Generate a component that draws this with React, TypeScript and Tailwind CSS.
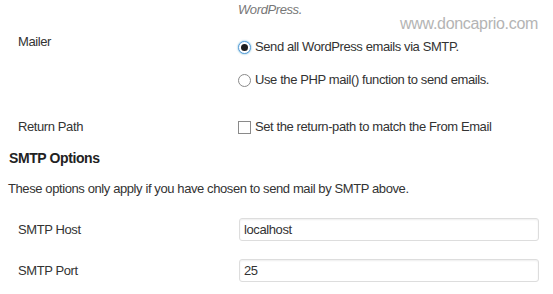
import React from "react";

function Radio({ checked }: { checked?: boolean }) {
  return (
    <span
      className={
        "inline-flex items-center justify-center w-[13px] h-[13px] rounded-full border bg-white shrink-0 " +
        (checked
          ? "border-[#5b9dd9] shadow-[0_0_2px_rgba(30,140,190,0.8)]"
          : "border-[#8a8a8a]")
      }
    >
      {checked && <span className="w-[7px] h-[7px] rounded-full bg-[#1e1e1e]" />}
    </span>
  );
}

export default function App() {
  return (
    <div
      className="relative w-[553px] h-[294px] bg-white text-[#333] text-[13px] tracking-[-0.4px] overflow-hidden"
      style={{ fontFamily: '"Liberation Sans", Arial, sans-serif' }}
    >
      {/* watermark */}
      <div className="absolute left-[400px] top-[14px] text-[16px] leading-[20px] tracking-[-0.3px] text-[#b4b4b4]">
        www.doncaprio.com
      </div>

      <div className="grid grid-cols-[238px_1fr]">
        <div className="h-[20px]" />
        <div className="h-[20px] leading-[20px] italic text-[#777]">WordPress.</div>

        {/* Mailer */}
        <div className="pl-[18px] pt-[12px] leading-[20px]">Mailer</div>
        <div className="flex flex-col gap-[13px] pt-[17px]">
          <label className="flex items-center gap-[4px] h-[20px]">
            <Radio checked />
            <span>Send all WordPress emails via SMTP.</span>
          </label>
          <label className="flex items-center gap-[4px] h-[20px]">
            <Radio />
            <span>Use the PHP mail() function to send emails.</span>
          </label>
        </div>

        {/* Return path */}
        <div className="pl-[18px] pt-[27px] leading-[20px]">Return Path</div>
        <div className="pt-[27px]">
          <label className="flex items-center gap-[4px] h-[20px]">
            <span className="w-[13px] h-[13px] border border-[#8a8a8a] bg-white shrink-0" />
            <span>Set the return-path to match the From Email</span>
          </label>
        </div>
      </div>

      <h3 className="pl-[9px] mt-[11px] h-[20px] leading-[20px] text-[14px] font-bold text-[#222]">
        SMTP Options
      </h3>
      <p className="pl-[8px] mt-[11px] h-[20px] leading-[20px]">
        These options only apply if you have chosen to send mail by SMTP above.
      </p>

      <div className="grid grid-cols-[239px_300px] gap-y-[18px] mt-[19px]">
        <div className="pl-[18px] flex items-center h-[23px]">SMTP Host</div>
        <div className="h-[23px] border border-[#ddd] rounded-[3px] shadow-[inset_0_1px_2px_rgba(0,0,0,0.07)] pl-[4px] flex items-center text-[#333]">
          localhost
        </div>
        <div className="pl-[18px] flex items-center h-[23px]">SMTP Port</div>
        <div className="h-[23px] border border-[#ddd] rounded-[3px] shadow-[inset_0_1px_2px_rgba(0,0,0,0.07)] pl-[4px] flex items-center text-[#333]">
          25
        </div>
      </div>
    </div>
  );
}
